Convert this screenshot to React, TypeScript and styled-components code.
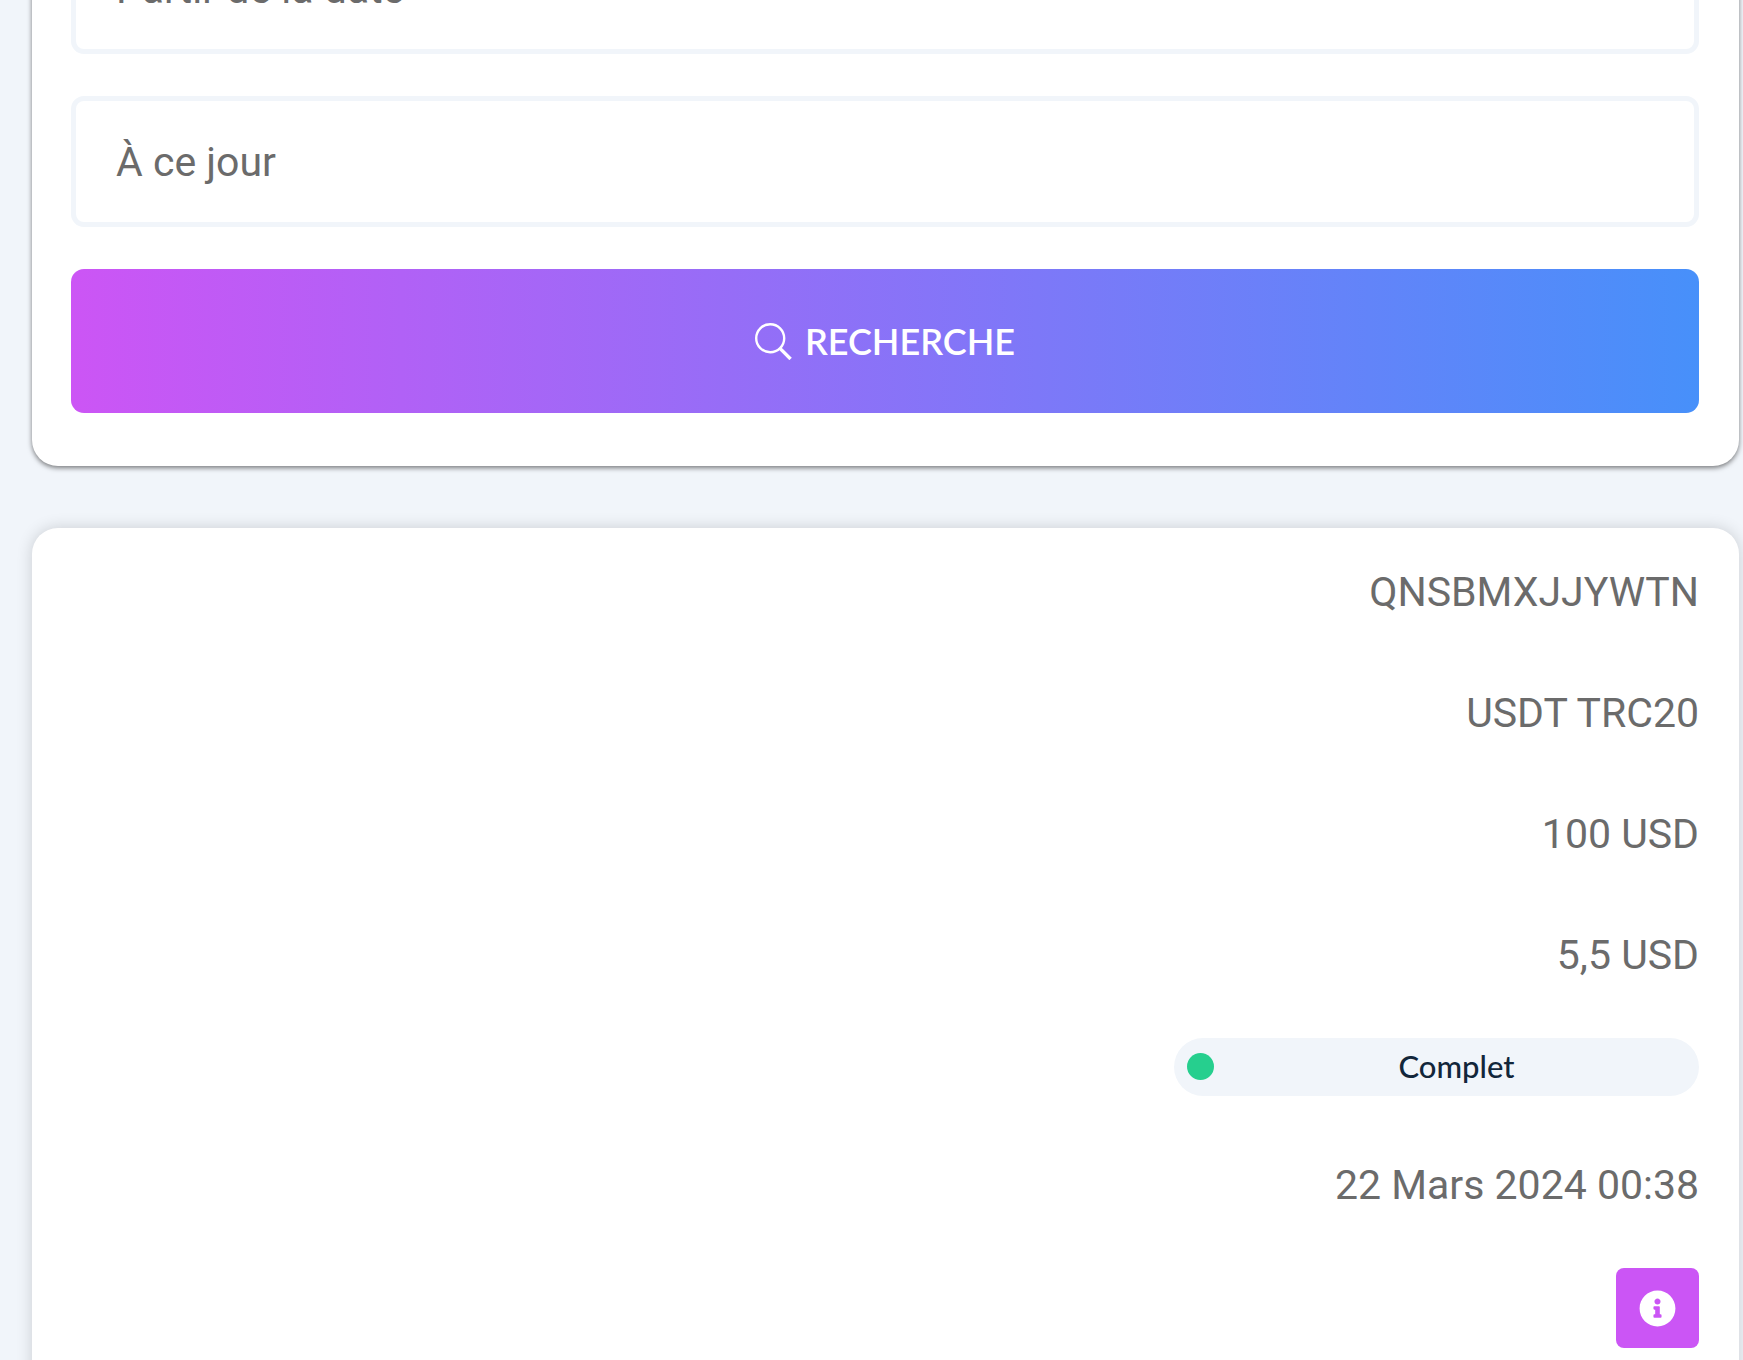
import React from "react";
import styled, { createGlobalStyle } from "styled-components";
import { FaInfoCircle } from "react-icons/fa";

const GlobalStyle = createGlobalStyle`
  *, *::before, *::after { box-sizing: border-box; }
  body {
    margin: 0;
    background: #f1f5fa;
    color: #6b6b6b;
    font-family: Roboto, "Open Sans", sans-serif;
    font-size: 41px;
  }
`;

const Viewport = styled.div`
  height: 100vh;
  overflow: hidden;
`;

/* The page is scrolled down past the top of the search form. */
const Page = styled.main`
  display: flex;
  flex-direction: column;
  gap: 62px;
  margin-top: -117px;
  padding: 0 4px 62px 32px;
`;

const SearchCard = styled.form`
  display: flex;
  flex-direction: column;
  gap: 42px;
  padding: 40px 40px 53px 39px;
  background: #fff;
  border-radius: 26px;
  box-shadow: 0 2px 5px rgba(0, 0, 0, 0.5);
`;

const Field = styled.input`
  width: 100%;
  height: 131px;
  padding: 0 40px;
  border: 5px solid #f1f5fa;
  border-radius: 13px;
  background: #fff;
  color: #6b6b6b;
  font: inherit;
  outline: none;

  &::placeholder {
    color: #6b6b6b;
    opacity: 1;
  }
`;

const SearchButton = styled.button`
  display: flex;
  align-items: center;
  justify-content: center;
  gap: 13px;
  height: 144px;
  border: 0;
  border-radius: 13px;
  background: linear-gradient(90deg, #cc55f5, #4790fa);
  color: #fff;
  font-family: Lato, sans-serif;
  font-size: 36px;
  font-weight: 600;
  line-height: 36px;
  text-transform: uppercase;
  cursor: pointer;
`;

const ResultCard = styled.ul`
  margin: 0;
  padding: 4px 40px 40px 39px;
  list-style: none;
  background: #fff;
  border-radius: 26px;
  box-shadow: 0 0 16px rgba(0, 0, 0, 0.16);
`;

const Cell = styled.li<{ $compact?: boolean }>`
  display: flex;
  justify-content: flex-end;
  padding: ${(p) => (p.$compact ? "22px 0 29px" : "30px 0")};
  line-height: 61px;
  text-align: right;
`;

const Status = styled.span`
  display: flex;
  align-items: center;
  width: 525px;
  max-width: 100%;
  height: 58px;
  padding: 0 0 2px 13px;
  border-radius: 29px;
  background: #f1f5fa;
  color: #12263a;
  font-family: Lato, sans-serif;
  font-size: 31px;
  font-weight: 500;
`;

const Dot = styled.i`
  width: 27px;
  height: 27px;
  border-radius: 50%;
  background: #26cf8e;
`;

const StatusLabel = styled.span`
  flex: 1;
  text-align: center;
`;

const InfoButton = styled.button`
  display: flex;
  align-items: center;
  justify-content: center;
  width: 83px;
  height: 80px;
  padding: 0;
  border: 0;
  border-radius: 8px;
  background: #cb55f5;
  color: #fff;
  font-size: 37px;
  cursor: pointer;
`;

function SearchIcon() {
  return (
    <svg width="37" height="37" viewBox="0 0 37 37" fill="none" stroke="currentColor" aria-hidden="true">
      <circle cx="15.2" cy="15.2" r="14" strokeWidth="2.4" />
      <path d="M25 25.4 35.6 36" strokeWidth="3.4" />
    </svg>
  );
}

const amounts = ["QNSBMXJJYWTN", "USDT TRC20", "100 USD", "5,5 USD"];

export default function App() {
  return (
    <Viewport>
      <GlobalStyle />
      <Page>
        <SearchCard onSubmit={(e) => e.preventDefault()}>
          <Field type="text" aria-label="Partir de la date" placeholder="Partir de la date" />
          <Field type="text" aria-label="À ce jour" placeholder="À ce jour" />
          <SearchButton type="submit">
            <SearchIcon />
            Recherche
          </SearchButton>
        </SearchCard>
        <ResultCard>
          {amounts.map((text) => (
            <Cell key={text}>{text}</Cell>
          ))}
          <Cell $compact>
            <Status>
              <Dot />
              <StatusLabel>Complet</StatusLabel>
            </Status>
          </Cell>
          <Cell>22 Mars 2024 00:38</Cell>
          <Cell $compact>
            <InfoButton type="button" aria-label="Détails">
              <FaInfoCircle />
            </InfoButton>
          </Cell>
        </ResultCard>
      </Page>
    </Viewport>
  );
}
